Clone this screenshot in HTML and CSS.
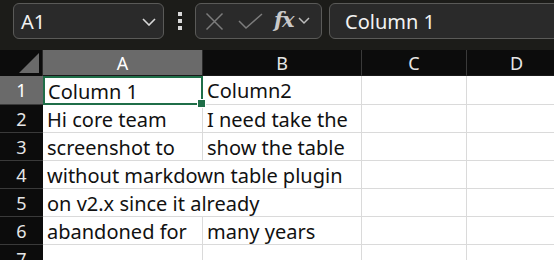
FILE: index.html
```html
<!DOCTYPE html>
<html>
<head>
<meta charset="utf-8">
<link rel="stylesheet" href="styles.css">
</head>
<body>
<div class="toolbar">
  <div class="namebox">
    <span class="ref">A1</span>
    <svg class="chev" width="14" height="8" viewBox="0 0 14 8"><path d="M1 1 L7 7 L13 1" fill="none" stroke="#d8d8d8" stroke-width="1.6"/></svg>
  </div>
  <div class="dots"><i></i><i></i><i></i></div>
  <div class="fbox">
    <svg class="ico" width="19" height="19" viewBox="0 0 19 19"><path d="M1.5 1.5 L17.5 17.5 M17.5 1.5 L1.5 17.5" stroke="#7c7c7c" stroke-width="1.5" fill="none"/></svg>
    <svg class="ico" width="25" height="18" viewBox="0 0 25 18"><path d="M1 9 L8 16 L24 2" stroke="#7c7c7c" stroke-width="1.5" fill="none"/></svg>
    <span class="fx">fx</span>
    <svg class="chev2" width="12" height="8" viewBox="0 0 12 8"><path d="M1 1 L6 6 L11 1" fill="none" stroke="#bdbdbd" stroke-width="1.5"/></svg>
  </div>
  <div class="finput">Column 1</div>
</div>
<div class="sheet">
  <div class="corner"><span class="tri"></span></div>
  <div class="ch sel">A</div>
  <div class="ch">B</div>
  <div class="ch">C</div>
  <div class="ch">D</div>

  <div class="rh sel">1</div>
  <div class="c active">Column 1<span class="handle"></span></div>
  <div class="c">Column2</div>
  <div class="c"></div>
  <div class="c"></div>

  <div class="rh">2</div>
  <div class="c">Hi core team</div>
  <div class="c">I need take the</div>
  <div class="c"></div>
  <div class="c"></div>

  <div class="rh">3</div>
  <div class="c">screenshot to</div>
  <div class="c">show the table</div>
  <div class="c"></div>
  <div class="c"></div>

  <div class="rh">4</div>
  <div class="c span2">without markdown table plugin</div>
  <div class="c"></div>
  <div class="c"></div>

  <div class="rh">5</div>
  <div class="c span2">on v2.x since it already</div>
  <div class="c"></div>
  <div class="c"></div>

  <div class="rh">6</div>
  <div class="c">abandoned for</div>
  <div class="c">many years</div>
  <div class="c"></div>
  <div class="c"></div>

  <div class="rh">7</div>
  <div class="c"></div>
  <div class="c"></div>
  <div class="c"></div>
  <div class="c"></div>
</div>
</body>
</html>
```
FILE: styles.css
```css
html, body {
  margin: 0;
  padding: 0;
  width: 554px;
  height: 260px;
  overflow: hidden;
  background: #1c1c19;
  font-family: "Noto Sans", "Noto Sans CJK SC", sans-serif;
}
.toolbar {
  display: flex;
  align-items: center;
  height: 36px;
  padding: 3px 0 11px 13px;
}
.toolbar > * { flex: none; }
.namebox {
  box-sizing: border-box;
  width: 151px;
  height: 36px;
  border: 1px solid #5a5a58;
  border-radius: 6px;
  background: #2a2a2a;
  display: flex;
  align-items: center;
  justify-content: space-between;
  padding: 0 7px 0 7px;
  color: #f2f2f2;
  font-size: 20px;
}
.chev { margin-top: 2px; }
.dots {
  display: flex;
  flex-direction: column;
  gap: 3px;
  margin: 0 13px 0 14px;
}
.dots i {
  display: block;
  width: 4px;
  height: 4px;
  background: #d8d8d8;
}
.fbox {
  box-sizing: border-box;
  width: 127px;
  height: 36px;
  border: 1px solid #5a5a58;
  border-radius: 6px;
  background: #2a2a2a;
  display: flex;
  align-items: center;
  padding: 0 4px 0 9px;
}
.fbox .ico { margin-right: 14px; }
.fbox .ico + .ico { margin-right: 11px; }
.fx {
  font-family: "DejaVu Serif", "Liberation Serif", serif;
  font-style: italic;
  font-weight: bold;
  font-size: 21px;
  color: #c9c9c9;
  margin-right: 4px;
  margin-top: -3px;
  letter-spacing: -1px;
}
.finput {
  box-sizing: border-box;
  width: 240px;
  height: 36px;
  margin-left: 7px;
  border: 1px solid #5a5a58;
  border-radius: 6px;
  background: #2a2a2a;
  color: #f2f2f2;
  font-size: 20px;
  display: flex;
  align-items: center;
  padding-left: 15px;
}
.sheet {
  display: grid;
  grid-template-columns: 43px 160px 159px 105px 100px;
  grid-template-rows: 26px 29px repeat(6, 28px);
  background: #ffffff;
}
.corner {
  background: #0c0c0c;
  position: relative;
  border-right: 1px solid #2a2a2a;
}
.tri {
  position: absolute;
  right: 3px;
  bottom: 3px;
  width: 0;
  height: 0;
  border-left: 20px solid transparent;
  border-bottom: 20px solid #6a6a6a;
}
.ch {
  background: #0c0c0c;
  color: #e6e6e6;
  font-size: 18px;
  display: flex;
  align-items: center;
  justify-content: center;
  border-right: 1px solid #3a3a3a;
  border-bottom: 1px solid #1a1a1a;
}
.ch.sel {
  background: #6a6a6a;
  color: #ffffff;
  border-right: 1px solid #2a2a2a;
}
.rh {
  background: #0c0c0c;
  color: #e6e6e6;
  font-size: 18px;
  display: flex;
  align-items: center;
  justify-content: center;
  border-bottom: 1px solid #3a3a3a;
}
.rh.sel {
  background: #6a6a6a;
  color: #ffffff;
}
.c {
  box-sizing: border-box;
  border-right: 1px solid #dadada;
  border-bottom: 1px solid #dadada;
  color: #111111;
  font-size: 20px;
  padding-left: 4px;
  padding-top: 1px;
  white-space: nowrap;
  display: flex;
  align-items: center;
  position: relative;
}
.span2 { grid-column: span 2; }
.c.active {
  border: 2px solid #1f6e48;
  padding-left: 3px;
}
.handle {
  position: absolute;
  right: -5px;
  bottom: -5px;
  width: 7px;
  height: 7px;
  background: #1f6e48;
  border: 1px solid #ffffff;
  z-index: 2;
}
```
